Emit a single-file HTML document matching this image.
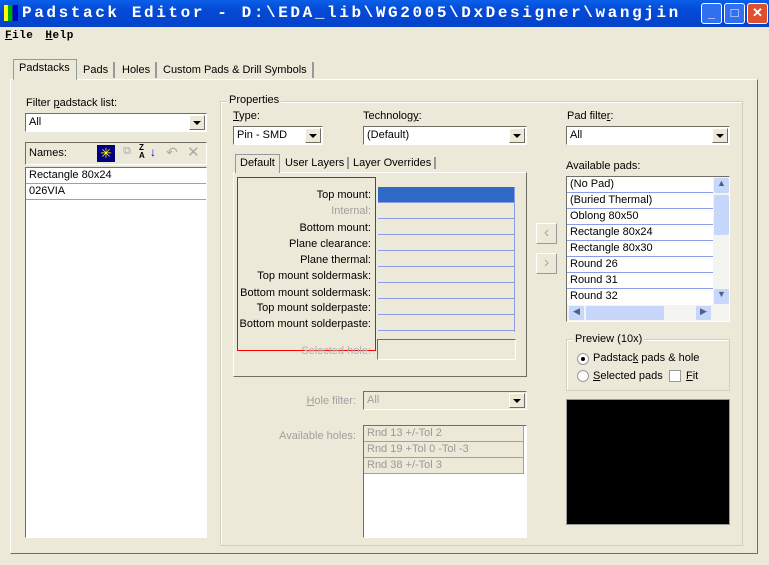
<!DOCTYPE html>
<html><head><meta charset="utf-8"><style>
*{box-sizing:border-box;margin:0;padding:0}
body{width:769px;height:565px;overflow:hidden;background:#ece9d8;font-family:"Liberation Sans",sans-serif;font-size:11px;color:#000;position:relative}
.a{position:absolute}
.title{left:0;top:0;width:769px;height:27px;background:linear-gradient(#0a5fe8,#0449d6 40%,#0343c9);color:#fff;font-family:"Liberation Mono",monospace;font-weight:bold;font-size:16px;line-height:27px;padding-left:22px;letter-spacing:2.6px;white-space:nowrap}
.tb{top:3px;width:21px;height:21px;border:1px solid #fff;border-radius:3px;background:#2f6ff0;color:#fff;font-size:13px;text-align:center;line-height:18px;font-weight:bold}
.menu{top:27px;left:0;width:769px;height:18px;font-family:"Liberation Mono",monospace;font-weight:bold;font-size:11px;line-height:18px;letter-spacing:0.5px}
.sunk{border:1px solid;border-color:#716f64 #fff #fff #716f64;background:#fff}
.combo{height:19px;border:1px solid;border-color:#716f64 #fff #fff #716f64;background:#fff;padding-left:3px;line-height:17px}
.combo .btn{position:absolute;right:1px;top:1px;width:16px;height:15px;background:#ece9d8;border:1px solid;border-color:#fff #716f64 #716f64 #fff}
.combo .btn:after{content:"";position:absolute;left:3px;top:5px;border-left:4px solid transparent;border-right:4px solid transparent;border-top:4px solid #000}
.grp{border:1px solid #d0d0bf;box-shadow:inset 1px 1px 0 #fff}
.gl{background:#ece9d8;padding:0 2px}
.row{height:16px;border-bottom:1px solid #8d9ce9;padding-left:3px;line-height:15px;white-space:nowrap}
.lbl{text-align:right;width:134px;left:237px}
.tab{border:1px solid #919b9c;border-bottom:none;background:#f4f3ee;line-height:17px;height:18px;padding:0 4px}
</style></head><body>
<div class="a title">Padstack Editor - D:\EDA_lib\WG2005\DxDesigner\wangjin</div>
<div class="a" style="left:4px;top:5px;width:14px;height:16px;background:linear-gradient(90deg,#ff0 0 30%,#0a0 30% 60%,#00c 60%)"></div>
<div class="a tb" style="left:701px">_</div>
<div class="a tb" style="left:724px">□</div>
<div class="a tb" style="left:747px;background:#e0502c">✕</div>
<div class="a menu"><span style="margin-left:5px"><u>F</u>ile</span><span style="margin-left:12px"><u>H</u>elp</span></div>

<div class="a" style="left:10px;top:79px;width:748px;height:475px;border:1px solid;border-color:#fff #716f64 #716f64 #fff"></div>
<div class="a" style="left:13px;top:59px;width:64px;height:21px;border:1px solid #919b9c;border-bottom:none;background:#ece9d8;padding:2px 5px">Padstacks</div>
<div class="a" style="left:78px;top:62px;padding:2px 5px;border-right:2px solid #999">Pads</div>
<div class="a" style="left:117px;top:62px;padding:2px 5px;border-right:2px solid #999">Holes</div>
<div class="a" style="left:158px;top:62px;padding:2px 5px;border-right:2px solid #999">Custom Pads &amp; Drill Symbols</div>

<div class="a" style="left:26px;top:97px">Filter <u>p</u>adstack list:</div>
<div class="a combo" style="left:25px;top:113px;width:182px">All<div class="btn"></div></div>
<div class="a" style="left:25px;top:142px;width:182px;height:23px;border:1px solid;border-color:#716f64 #fff #fff #716f64;padding:4px 3px">Names:</div>
<div class="a" style="left:97px;top:145px;width:18px;height:17px;background:#00007f;color:#ff0;text-align:center;line-height:17px;font-size:14px">✳</div>
<div class="a" style="left:118px;top:145px;width:18px;height:17px;color:#aaa;text-align:center">⧉</div>
<div class="a" style="left:139px;top:144px;width:18px;height:18px;font-size:8px;line-height:8px;font-weight:bold">Z<br>A</div>
<div class="a" style="left:150px;top:145px;color:#00c;font-size:12px">↓</div>
<div class="a" style="left:166px;top:144px;color:#aaa;font-size:14px">↶</div>
<div class="a" style="left:187px;top:143px;color:#aaa;font-size:15px">✕</div>
<div class="a sunk" style="left:25px;top:167px;width:182px;height:371px">
<div class="row">Rectangle 80x24</div><div class="row">026VIA</div></div>

<div class="a grp" style="left:220px;top:101px;width:523px;height:445px"></div>
<div class="a gl" style="left:227px;top:94px">Properties</div>
<div class="a" style="left:233px;top:110px"><u>T</u>ype:</div>
<div class="a combo" style="left:233px;top:126px;width:90px">Pin - SMD<div class="btn"></div></div>
<div class="a" style="left:363px;top:110px">Technolog<u>y</u>:</div>
<div class="a combo" style="left:363px;top:126px;width:164px">(Default)<div class="btn"></div></div>

<div class="a" style="left:233px;top:172px;width:294px;height:205px;border:1px solid;border-color:#fff #716f64 #716f64 #fff"></div>
<div class="a tab" style="left:235px;top:154px;height:19px;background:#ece9d8">Default</div>
<div class="a" style="left:282px;top:157px;padding:0 3px;border-right:2px solid #999">User Layers</div>
<div class="a" style="left:350px;top:157px;padding:0 3px;border-right:2px solid #999">Layer Overrides</div>
<div class="a" style="left:237px;top:177px;width:139px;height:174px;border:1px solid #f00"></div>
<div class="a lbl" style="top:189px">Top mount:</div>
<div class="a lbl" style="top:205px;color:#a0a0a0">Internal:</div>
<div class="a lbl" style="top:222px">Bottom mount:</div>
<div class="a lbl" style="top:238px">Plane clearance:</div>
<div class="a lbl" style="top:254px">Plane thermal:</div>
<div class="a lbl" style="top:270px">Top mount soldermask:</div>
<div class="a lbl" style="top:287px">Bottom mount soldermask:</div>
<div class="a lbl" style="top:302px">Top mount solderpaste:</div>
<div class="a lbl" style="top:318px">Bottom mount solderpaste:</div>
<div class="a lbl" style="top:345px;color:#b0b0b0">Selected hole:</div>
<div class="a" style="left:378px;top:187px;width:137px;height:145px;border-right:1px solid #8d9ce9">
<div class="row" style="background:#316ac5"></div><div class="row"></div><div class="row"></div><div class="row"></div><div class="row"></div><div class="row"></div><div class="row"></div><div class="row"></div><div class="row"></div></div>
<div class="a" style="left:377px;top:339px;width:139px;height:21px;border:1px solid;border-color:#716f64 #fff #fff #716f64"></div>

<div class="a" style="left:300px;top:395px;width:56px;text-align:right;color:#a0a0a0"><u>H</u>ole filter:</div>
<div class="a combo" style="left:363px;top:391px;width:164px;background:#ece9d8;color:#a0a0a0">All<div class="btn"></div></div>
<div class="a" style="left:270px;top:430px;width:86px;text-align:right;color:#a0a0a0">Available holes:</div>
<div class="a sunk" style="left:363px;top:425px;width:164px;height:113px;color:#999">
<div class="row" style="background:#ece9d8;width:160px;border-right:1px solid #8d9ce9">Rnd 13 +/-Tol 2</div>
<div class="row" style="background:#ece9d8;width:160px;border-right:1px solid #8d9ce9">Rnd 19 +Tol 0 -Tol -3</div>
<div class="row" style="background:#ece9d8;width:160px;border-right:1px solid #8d9ce9">Rnd 38 +/-Tol 3</div></div>

<div class="a" style="left:536px;top:223px;width:21px;height:21px;border:1px solid;border-color:#fff #999 #999 #fff;color:#aaa;text-align:center;font-size:16px;line-height:18px">‹</div>
<div class="a" style="left:536px;top:253px;width:21px;height:21px;border:1px solid;border-color:#fff #999 #999 #fff;color:#aaa;text-align:center;font-size:16px;line-height:18px">›</div>

<div class="a" style="left:567px;top:110px">Pad filte<u>r</u>:</div>
<div class="a combo" style="left:566px;top:126px;width:164px">All<div class="btn"></div></div>
<div class="a" style="left:566px;top:160px">Available pads:</div>
<div class="a sunk" style="left:566px;top:176px;width:164px;height:146px">
<div style="width:146px">
<div class="row">(No Pad)</div><div class="row">(Buried Thermal)</div><div class="row">Oblong 80x50</div><div class="row">Rectangle 80x24</div><div class="row">Rectangle 80x30</div><div class="row">Round 26</div><div class="row">Round 31</div><div class="row" style="border:none">Round 32</div></div>
<div class="a" style="left:146px;top:0;width:16px;height:128px;background:#f3f3ef"></div>
<div class="a" style="left:147px;top:1px;width:15px;height:15px;background:#c6d7fb;border-radius:2px;color:#4d6185;font-size:9px;text-align:center">▲</div>
<div class="a" style="left:147px;top:18px;width:15px;height:40px;background:#c6d7fb;border-radius:2px"></div>
<div class="a" style="left:147px;top:112px;width:15px;height:15px;background:#c6d7fb;border-radius:2px;color:#4d6185;font-size:9px;text-align:center">▼</div>
<div class="a" style="left:0;top:128px;width:162px;height:16px;background:#f3f3ef"></div>
<div class="a" style="left:2px;top:129px;width:15px;height:14px;background:#c6d7fb;color:#4d6185;font-size:9px;text-align:center">◀</div>
<div class="a" style="left:19px;top:129px;width:78px;height:14px;background:#c6d7fb"></div>
<div class="a" style="left:129px;top:129px;width:15px;height:14px;background:#c6d7fb;color:#4d6185;font-size:9px;text-align:center">▶</div>
</div>
<div class="a grp" style="left:566px;top:339px;width:164px;height:52px"></div>
<div class="a gl" style="left:573px;top:333px">Preview (10x)</div>
<div class="a" style="left:577px;top:353px;width:12px;height:12px;border-radius:50%;background:#fff;border:1px solid #999"><div style="width:4px;height:4px;background:#000;border-radius:50%;margin:3px"></div></div>
<div class="a" style="left:593px;top:352px">Padstac<u>k</u> pads &amp; hole</div>
<div class="a" style="left:577px;top:370px;width:12px;height:12px;border-radius:50%;background:#fff;border:1px solid #999"></div>
<div class="a" style="left:593px;top:370px"><u>S</u>elected pads</div>
<div class="a" style="left:669px;top:370px;width:12px;height:12px;background:#fff;border:1px solid #999"></div>
<div class="a" style="left:686px;top:370px"><u>F</u>it</div>
<div class="a" style="left:566px;top:399px;width:164px;height:126px;background:#000;border:1px solid #999"></div>
</body></html>
